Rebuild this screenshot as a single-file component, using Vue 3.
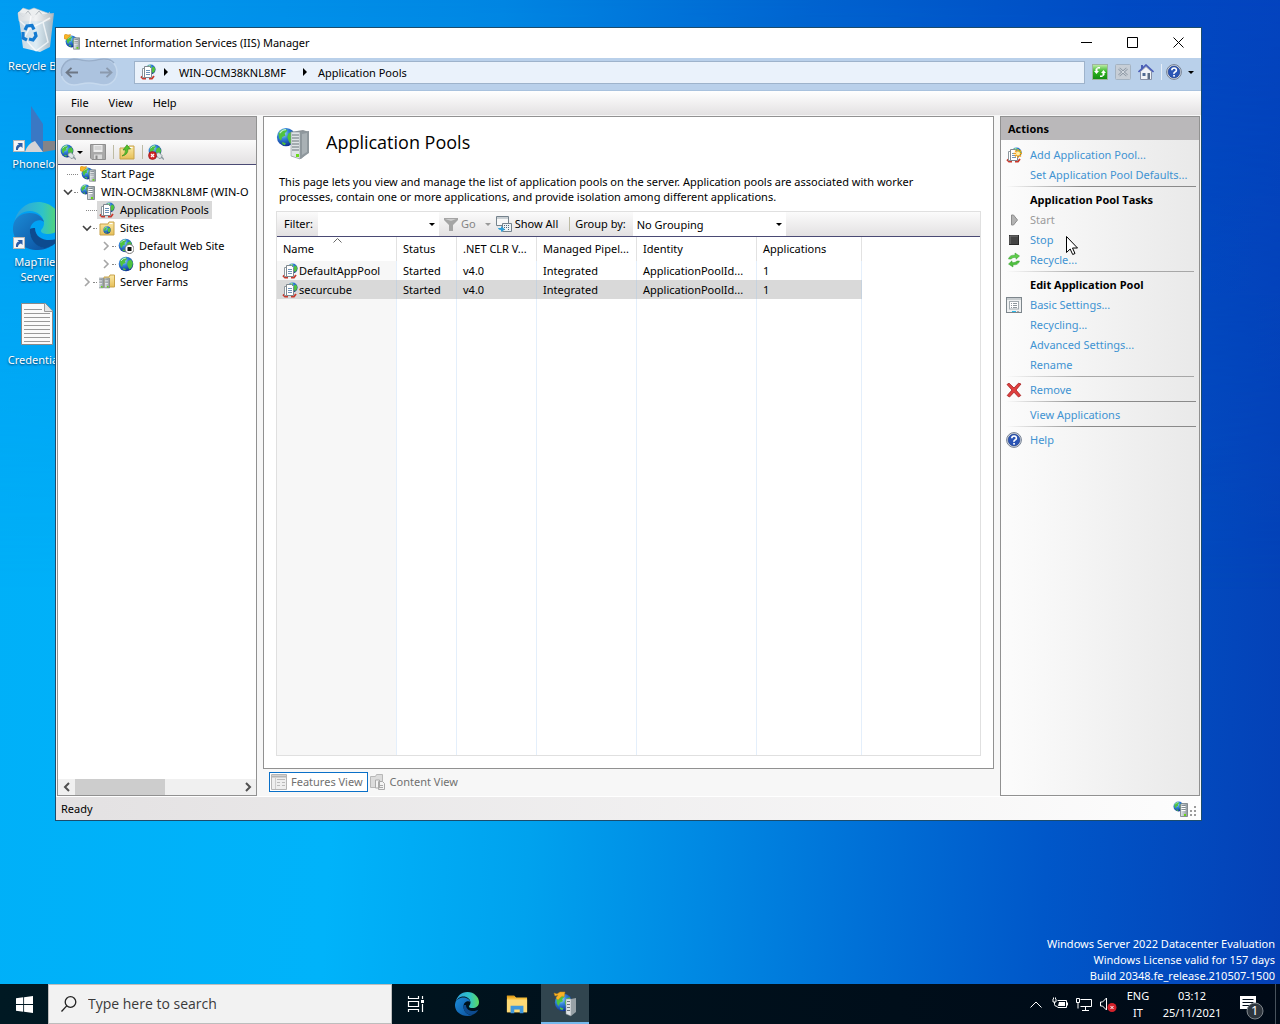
<script setup>
import { ref } from 'vue'

const desktopIcons = [
  { icon: 'bin', label: 'Recycle Bin' },
  { icon: 'phonelog', label: 'Phonelog' },
  { icon: 'edge', label: 'MapTiler Server', shortcut: true },
  { icon: 'textfile', label: 'Credentials' },
]

const tree = [
  { level: 0, icon: 'start', label: 'Start Page', twisty: '' },
  { level: 0, icon: 'globe-server', label: 'WIN-OCM38KNL8MF (WIN-O', twisty: 'open' },
  { level: 1, icon: 'pools', label: 'Application Pools', twisty: '', selected: true },
  { level: 1, icon: 'sites', label: 'Sites', twisty: 'open' },
  { level: 2, icon: 'globe-stop', label: 'Default Web Site', twisty: 'closed' },
  { level: 2, icon: 'globe', label: 'phonelog', twisty: 'closed' },
  { level: 1, icon: 'farms', label: 'Server Farms', twisty: 'closed' },
]

const columns = ['Name', 'Status', '.NET CLR V...', 'Managed Pipel...', 'Identity', 'Applications']
const pools = [
  { name: 'DefaultAppPool', cells: ['Started', 'v4.0', 'Integrated', 'ApplicationPoolId...', '1'] },
  { name: 'securcube', cells: ['Started', 'v4.0', 'Integrated', 'ApplicationPoolId...', '1'] },
]
const selectedPool = ref('securcube')

const actionGroups = [
  { items: [{ icon: 'pools-new', label: 'Add Application Pool...' }, { label: 'Set Application Pool Defaults...' }] },
  {
    title: 'Application Pool Tasks',
    items: [
      { icon: 'play', label: 'Start', disabled: true },
      { icon: 'stop', label: 'Stop' },
      { icon: 'recycle', label: 'Recycle...' },
    ],
  },
  {
    title: 'Edit Application Pool',
    short: true,
    items: [
      { icon: 'settings', label: 'Basic Settings...' },
      { label: 'Recycling...' },
      { label: 'Advanced Settings...' },
      { label: 'Rename' },
    ],
  },
  { short: true, items: [{ icon: 'remove', label: 'Remove' }] },
  { items: [{ label: 'View Applications' }] },
  { items: [{ icon: 'help', label: 'Help' }] },
]
</script>

<template>
  <div class="screen">
    <svg class="sprite" aria-hidden="true">
      <defs>
        <radialGradient id="gBlue" cx=".35" cy=".3" r=".75">
          <stop offset="0" stop-color="#b4e2ff" /><stop offset=".4" stop-color="#3385dc" /><stop offset="1" stop-color="#0c2c8e" />
        </radialGradient>
        <linearGradient id="gServer" x1="0" x2="1"><stop offset="0" stop-color="#e3e8ec" /><stop offset="1" stop-color="#8e979d" /></linearGradient>
        <linearGradient id="gFolder" x1="0" y1="0" x2="0" y2="1"><stop offset="0" stop-color="#fbe9a6" /><stop offset="1" stop-color="#e6bf58" /></linearGradient>
        <linearGradient id="gEdgeA" x1="0" x2="1"><stop offset="0" stop-color="#2d9fe0" /><stop offset=".6" stop-color="#2fc3c8" /><stop offset="1" stop-color="#5ed95e" /></linearGradient>
        <linearGradient id="gEdgeB" x1="0" y1="0" x2="1" y2="1"><stop offset="0" stop-color="#1b8bd6" /><stop offset="1" stop-color="#0c4f9e" /></linearGradient>
        <linearGradient id="gGreen" x1="0" y1="0" x2="0" y2="1"><stop offset="0" stop-color="#c4efae" /><stop offset=".5" stop-color="#2fb31f" /><stop offset="1" stop-color="#128a12" /></linearGradient>
        <linearGradient id="gBin" x1="0" x2="1"><stop offset="0" stop-color="#d5dade" /><stop offset=".5" stop-color="#f1f3f4" /><stop offset="1" stop-color="#aeb5bb" /></linearGradient>
      </defs>
      <symbol id="globe" viewBox="0 0 16 16">
        <circle cx="8" cy="8" r="7.3" fill="url(#gBlue)" />
        <path d="M2 5Q4 1.500 8 1.500L9 3 7 5 7.500 7 5 8 4 11 2.500 9ZM10 5l3-1.500 2 3.500-1 4-2.500 2.500L10 11l-1-3ZM5 12l3 1-1 1.500-2-1Z" fill="#4fc23f" />
        <path d="M3 5Q5 2 8 2" stroke="#d3f4ff" fill="none" opacity=".8" />
      </symbol>
      <symbol id="server" viewBox="0 0 8 14">
        <path d="M.5 1.500 2 .5h5.500V13.500H.5Z" fill="url(#gServer)" stroke="#737c82" stroke-width=".8" />
        <path d="M1.500 3.500h4M1.500 5.500h4M1.500 7.500h4" stroke="#fff" /><path d="M1.500 2.500h4M1.500 4.500h4M1.500 6.500h4" stroke="#59646b" stroke-width=".6" />
        <rect x="4" y="11" width="2" height="2" fill="#68d713" />
      </symbol>
      <symbol id="globe-server" viewBox="0 0 16 16">
        <use href="#globe" x="0" y="0" width="11" height="11" /><use href="#server" x="7" y="2" width="8" height="14" />
      </symbol>
      <symbol id="start" viewBox="0 0 16 16">
        <use href="#globe" x="1" y="1" width="13" height="13" />
        <path d="M0 1.500 1.500 0 4 1 6.500.5 6 2.500 4.500 3.500 2.500 5.500 0 4.500Z" fill="#f8b427" stroke="#c98410" stroke-width=".5" />
        <use href="#server" x="9" y="3" width="7" height="13" />
      </symbol>
      <symbol id="pools" viewBox="0 0 16 16">
        <use href="#globe" x="5" y="0" width="11" height="11" />
        <path d="M1 12.500 3 14.500h3M14 12l-2 2.500H9" stroke="#c9392d" stroke-width="1.800" fill="none" />
        <path d="M2.500 4.500h6v9h-6Z" fill="#fff" stroke="#8f989e" /><path d="M4.500 2.500h5l2 2v9h-7Z" fill="#fff" stroke="#7f888f" />
        <path d="M6 6.500h4M6 8.500h4M6 10.500h4" stroke="#6f93b8" />
      </symbol>
      <symbol id="pools-new" viewBox="0 0 16 16">
        <use href="#pools" width="16" height="16" />
        <path d="M12 2v9M7.500 6.500h9M9 3.500l6 6M15 3.500l-6 6" stroke="#f3a11c" stroke-width="1.300" /><circle cx="12" cy="6.500" r="2" fill="#fff1a8" />
      </symbol>
      <symbol id="folder" viewBox="0 0 16 16">
        <path d="M1 4h8l1-2h5v13H1Z" fill="url(#gFolder)" stroke="#c7a24a" /><path d="M10.500 3.500h3" stroke="#fff" />
      </symbol>
      <symbol id="sites" viewBox="0 0 16 16"><use href="#folder" width="16" height="16" /><use href="#globe" x="4" y="6" width="8" height="8" /></symbol>
      <symbol id="globe-stop" viewBox="0 0 16 16">
        <use href="#globe" width="15" height="15" /><circle cx="11.500" cy="11" r="4.500" fill="#fff" stroke="#777" /><rect x="9.500" y="9" width="4" height="4" fill="#111" />
      </symbol>
      <symbol id="farms" viewBox="0 0 16 16">
        <path d="M5 3h5l1-2h4.500v12H5Z" fill="url(#gFolder)" stroke="#c7a24a" /><use href="#server" x="-1" y="3" width="6" height="12" /><use href="#server" x="5" y="3" width="6" height="12" />
      </symbol>
      <symbol id="plug" viewBox="0 0 16 16">
        <use href="#globe" width="14" height="14" /><path d="M13 12.500l3 3" stroke="#8e9aa0" stroke-width="1.500" /><path d="M8 9.500 11 8.500l3 3-.5 2.500-2.500.5-3-3Z" fill="#dbe4e6" stroke="#7c888e" stroke-width=".8" />
      </symbol>
      <symbol id="unplug" viewBox="0 0 16 16">
        <use href="#plug" width="16" height="16" /><circle cx="4.500" cy="11.500" r="4" fill="#d32525" stroke="#8c1212" stroke-width=".6" /><path d="M3 10l3 3M6 10l-3 3" stroke="#fff" stroke-width="1.300" />
      </symbol>
      <symbol id="save" viewBox="0 0 16 16">
        <path d="M.5.5h15v15H2L.5 14Z" fill="#a9a9a9" stroke="#8f8f8f" /><path d="M3.500 1h9v7h-9Z" fill="#eee" /><path d="M4.500 3h7M4.500 5h7" stroke="#bbb" /><path d="M4 10.500h8V15H4Z" fill="#d9d9d9" /><path d="M5.500 11.500h2V15h-2Z" fill="#888" />
      </symbol>
      <symbol id="folder-up" viewBox="0 0 16 16">
        <use href="#folder" width="16" height="16" /><path d="M3 12Q7 10 6.500 6H4L8 .8 11.500 5H9Q9 11 3 12Z" fill="#56c02c" stroke="#2d8817" stroke-width=".6" />
      </symbol>
      <symbol id="refresh" viewBox="0 0 16 16">
        <rect x=".5" y=".5" width="15" height="15" fill="url(#gGreen)" stroke="#9fb39f" /><path d="M8 4.500H5.500V7H7L4.500 10 2 7h1.500V5L6 3h2ZM8 11.500h2.500V9H9l2.500-3L14 9h-1.500v2L10 13H8Z" fill="#fff" />
      </symbol>
      <symbol id="halt" viewBox="0 0 16 16">
        <rect x=".5" y=".5" width="15" height="15" rx="1" fill="#c7ced6" stroke="#a4b3c2" /><path d="M4 4.500l8 7M12 4.500l-8 7" stroke="#8e99a5" stroke-width="2.500" /><path d="M4 4.500l8 7M12 4.500l-8 7" stroke="#d9dfe5" />
      </symbol>
      <symbol id="home" viewBox="0 0 16 16">
        <path d="M2.500 7.500 8 2.500l5.500 5V15.500h-11Z" fill="#f1f3f7" stroke="#8790a5" /><path d="M3 1h2v4H3Z" fill="#4c5fb5" /><path d="M.5 8 8 1l7.500 7" fill="none" stroke="#4b5eb8" stroke-width="1.600" /><path d="M4.500 9h3v3h-3Z" fill="#506a92" /><path d="M9.500 9h2.500v6H9.500Z" fill="#5c6d85" />
      </symbol>
      <symbol id="help" viewBox="0 0 16 16">
        <circle cx="8" cy="8" r="7.400" fill="#e1e4ea" stroke="#737f91" /><circle cx="8" cy="8" r="5.900" fill="#2b55b5" stroke="#173780" stroke-width=".6" /><path d="M5.800 6.300Q5.800 4 8.100 4T10.400 6.200Q10.400 7.300 9 8T8 10" stroke="#fff" stroke-width="1.600" fill="none" /><rect x="7.200" y="11" width="1.700" height="1.600" fill="#fff" />
      </symbol>
      <symbol id="play" viewBox="0 0 16 16"><path d="M5.500 3v10h2l4-5-4-5Z" fill="#b3b3b3" stroke="#8d8d8d" /></symbol>
      <symbol id="stop" viewBox="0 0 16 16"><rect x="3.500" y="3.500" width="9" height="9" fill="#454545" stroke="#2a2a2a" /><path d="M4 12V4h8" stroke="#777" fill="none" /></symbol>
      <symbol id="recycle" viewBox="0 0 16 16">
        <path d="M2.500 7Q3.500 2.800 9 3.200V1l4.500 3L10 7.200V5.400Q6.500 5 5 7Z" fill="#5fce4a" stroke="#31982a" stroke-width=".5" /><path d="M13.500 9Q12.500 13.200 7 12.800V15l-4.500-3L6 8.800v1.800Q9.500 11 11 9Z" fill="#4fc03e" stroke="#31982a" stroke-width=".5" />
      </symbol>
      <symbol id="settings" viewBox="0 0 16 16">
        <rect x=".5" y=".5" width="15" height="15" fill="#eef0f1" stroke="#7d868c" /><path d="M1 2h14" stroke="#a1a9ae" /><rect x="3.500" y="4.500" width="9" height="7.500" fill="#fff" stroke="#a3abb0" /><path d="M5 6.500h1M7 6.500h4M5 8.500h1M7 8.500h4M5 10.500h1M7 10.500h4" stroke="#8e979d" /><path d="M6 14.500h4" stroke="#28b7e8" /><path d="M11 14.500h2" stroke="#aaa" />
      </symbol>
      <symbol id="remove" viewBox="0 0 16 16"><path d="M1 2.500 3 1.200 8 6l4.500-4.800L15 2 10 8l4.800 5.500L12.500 15 8 10.200 3.500 15 1.200 13.500 6 8Z" fill="#e04040" stroke="#a51d1d" stroke-width=".8" /></symbol>
      <symbol id="bin" viewBox="13 0 48 48">
        <path d="M18 7l5-5 6 2 5-2 8 3 11 4-3 6H19Z" fill="#eceff0" stroke="#bfc5c9" stroke-width=".6" />
        <path d="M18 6l5 5 5-6 5 7 6-7 5 6 6-5" fill="none" stroke="#b4bbc0" /><path d="M18 6l15 3 21-2-4 34-10 5-17-4Z" fill="url(#gBin)" opacity=".92" />
        <path d="M20 15l9 8-5 9 12 13M31 10l-2 13 14-7 5 20-12 9M43 16l7-4" stroke="#fff" stroke-width="1.500" opacity=".7" fill="none" />
        <path d="M25 24l2-4 5-.5 2 4M35 26l1 4-3 4-4-1M27 34l-4-2 0-6" stroke="#147bd1" stroke-width="3.200" fill="none" />
      </symbol>
      <symbol id="phonelog" viewBox="0 0 48 48">
        <path d="M18 2l12 18v28L18 37Z" fill="#3a78c4" /><path d="M12 48q2-8 10-11l8 11Z" fill="#d4d4d6" /><path d="M30 37h18v8l-18 3Z" fill="#848488" /><use href="#arrow" x="0" y="36" width="12" height="12" />
      </symbol>
      <symbol id="arrow" viewBox="0 0 12 12"><rect x=".5" y=".5" width="11" height="11" fill="#f6f6f6" stroke="#b7b7b7" /><path d="M3 10Q2.500 5 6 4.500L4.500 3h5v5L8 6.500Q5 7 5 10Z" fill="#2c5ea8" /></symbol>
      <symbol id="edge" viewBox="0 0 48 48">
        <path d="M1 22C3 9 12 0 25 0s23 10 23 20c0 8-6 12-13 12-4 0-7-1-7-3s3-3 3-8c0-7-7-12-14-12C9 9 3 14 1 22Z" fill="url(#gEdgeA)" />
        <path d="M0 25C1 15 9 11 17 11c8 0 13 5 14 9-4-4-14-1-14 9 0 11 10 19 20 16-4 2-8 3-12 3C10 48-1 38 0 25Z" fill="url(#gEdgeB)" />
        <path d="M17 27c-1 12 8 19 16 19 6-1 12-6 14-11-6 5-25 5-25-9-2 0-4 0-5 1Z" fill="#0d4b8f" />
      </symbol>
      <symbol id="textfile" viewBox="0 0 48 48">
        <path d="M8.500 3.500h24L39.500 11V44.500H8.500Z" fill="#fafafa" stroke="#8a8a8a" /><path d="M31.500 3.500V11.500h8" fill="#e4e4e4" stroke="#9a9a9a" />
        <path d="M11 9.500h18M11 13.500h26M11 17.500h26M11 21.500h26M11 25.500h26M11 29.500h26M11 33.500h26M11 37.500h26M11 41.500h26" stroke="#999" />
      </symbol>
    </svg>

    <main class="desktop">
      <ul class="shortcuts">
        <li v-for="item in desktopIcons" :key="item.label">
          <svg class="big" viewBox="0 0 48 48"><use :href="'#' + item.icon" /><use v-if="item.shortcut" href="#arrow" x="0" y="35" width="12" height="12" /></svg>
          <span>{{ item.label }}</span>
        </li>
      </ul>

      <section class="window">
        <header class="titlebar">
          <svg class="i16"><use href="#start" /></svg>
          <h1>Internet Information Services (IIS) Manager</h1>
          <button class="wbtn" aria-label="Minimize"><svg viewBox="0 0 11 11"><path d="M0 5.500h11" /></svg></button>
          <button class="wbtn" aria-label="Maximize"><svg viewBox="0 0 11 11"><path d="M.5.5h10v10H.5Z" /></svg></button>
          <button class="wbtn" aria-label="Close"><svg viewBox="0 0 11 11"><path d="M.5.5l10 10M10.500.5l-10 10" /></svg></button>
        </header>

        <nav class="navbar">
          <div class="history">
            <svg class="hist-shape" viewBox="0 0 58 28"><path d="M14 1C20 1 22 3 29 3S38 1 44 1a13 13 0 0 1 0 26C38 27 36 25 29 25S20 27 14 27a13 13 0 0 1 0-26Z" fill="#acc3df" stroke="#c6d9ee" stroke-width="1.500" /><path d="M2 18A13 13 0 0 1 14 1C20 1 22 3 29 3S38 1 44 1q7 0 10 4" fill="none" stroke="#98aeca" stroke-width="1.500" /></svg>
            <button aria-label="Back"><svg viewBox="0 0 13 11"><path d="M13 5.500H2M6.500.8 1.500 5.500l5 4.700" stroke="#6d7785" stroke-width="1.800" fill="none" /></svg></button>
            <button aria-label="Forward"><svg viewBox="0 0 13 11"><path d="M0 5.500h11M6.500.8l5 4.700-5 4.700" stroke="#8b9aae" stroke-width="1.800" fill="none" /></svg></button>
          </div>
          <div class="address">
            <svg class="i16"><use href="#pools" /></svg>
            <i class="tri"></i><span>WIN-OCM38KNL8MF</span><i class="tri"></i><span>Application Pools</span>
          </div>
          <div class="navtools">
            <button aria-label="Refresh"><svg class="i16"><use href="#refresh" /></svg></button>
            <button aria-label="Stop"><svg class="i16"><use href="#halt" /></svg></button>
            <button aria-label="Home"><svg class="i16"><use href="#home" /></svg></button>
            <button class="helpbtn" aria-label="Help"><svg class="i16"><use href="#help" /></svg><i class="caret"></i></button>
          </div>
        </nav>

        <div class="menu"><button>File</button><button>View</button><button>Help</button></div>

        <div class="body">
          <aside class="pane side">
            <h2>Connections</h2>
            <div class="conntools">
              <button class="withcaret" aria-label="Connect"><svg class="i16"><use href="#plug" /></svg><i class="caret"></i></button>
              <button aria-label="Save"><svg class="i16"><use href="#save" /></svg></button>
              <i class="vsep"></i>
              <button aria-label="Up"><svg class="i16"><use href="#folder-up" /></svg></button>
              <i class="vsep"></i>
              <button aria-label="Disconnect"><svg class="i16"><use href="#unplug" /></svg></button>
            </div>
            <ul class="tree">
              <li v-for="n in tree" :key="n.label" :class="['l' + n.level, { selected: n.selected }]">
                <svg class="twisty" viewBox="0 0 12 12"><path v-if="n.twisty === 'open'" d="M2 4l4 4 4-4" stroke="#404040" stroke-width="1.600" fill="none" /><path v-if="n.twisty === 'closed'" d="M4 2l4 4-4 4" stroke="#a6a6a6" stroke-width="1.600" fill="none" /></svg>
                <i class="dots" :class="{ wide: !n.twisty }"></i>
                <a href="#"><svg class="i16"><use :href="'#' + n.icon" /></svg><span>{{ n.label }}</span></a>
              </li>
            </ul>
            <div class="hscroll">
              <button aria-label="Scroll left"><svg viewBox="0 0 6 8"><path d="M5 0 1 4l4 4" /></svg></button>
              <div class="track"><div class="thumb"></div></div>
              <button aria-label="Scroll right"><svg viewBox="0 0 6 8"><path d="M1 0l4 4-4 4" /></svg></button>
            </div>
          </aside>

          <div class="center">
            <section class="pane page">
              <div class="heading">
                <svg viewBox="0 0 34 34"><use href="#globe" width="20" height="20" /><path d="M15 5l12-2 6 2v20l-8 7-10-3Z" fill="#8c9499" /><path d="M15 5h9v27l-9-3Z" fill="#dfe4e7" stroke="#8a9297" stroke-width=".6" /><path d="M24 5l9-1v22l-9 6Z" fill="#8f989d" /><path d="M26 7l5-1v19l-5 3Z" fill="#a9b1b5" /><path d="M16 8h7M16 11h7M16 14h7M16 17h7M16 20h7M16 23h7" stroke="#6a747a" /><rect x="20" y="27" width="3" height="3" fill="#6ddb1c" /></svg>
                <h2>Application Pools</h2>
              </div>
              <p>This page lets you view and manage the list of application pools on the server. Application pools are associated with worker processes, contain one or more applications, and provide isolation among different applications.</p>
              <div class="list">
                <div class="filterbar">
                  <label for="filter">Filter:</label>
                  <div class="combo"><input id="filter" type="text" /><button aria-label="Filter history"><i class="caret"></i></button></div>
                  <button class="tool dim go"><svg viewBox="0 0 14 14"><path d="M0 1h14v2L9 8v6H5V8L0 3Z" fill="#a5a5a5" /><path d="M1 2h11L7 4Z" fill="#ccc" /></svg><span>Go</span><i class="caret"></i></button>
                  <button class="tool"><svg viewBox="0 0 16 16"><path d="M.5.500h12v9H.5Z" fill="#f8f8f8" stroke="#75828c" /><path d="M1 2h11" stroke="#9ca8b0" /><path d="M6.500 7.500h9v8h-9Z" fill="#eef3f6" stroke="#75828c" /><path d="M8 9.500h1M10 9.500h1M12 9.500h1M8 11.500h1M10 11.500h1M12 11.500h1M8 13.500h1M12 13.500h1" stroke="#52677a" /><path d="M2 9v3h3v-2l4 3.500L5 16v-2Q1 14 2 9Z" fill="#2e9fd8" /></svg><span>Show All</span></button>
                  <i class="vsep"></i>
                  <label for="group">Group by:</label>
                  <div class="combo group"><select id="group"><option>No Grouping</option></select><i class="caret"></i></div>
                </div>
                <div class="grid">
                  <table>
                    <colgroup><col class="c-name" /><col class="c-status" /><col class="c-clr" /><col class="c-pipe" /><col class="c-id" /><col class="c-apps" /></colgroup>
                    <thead><tr><th v-for="(c, i) in columns" :key="c">{{ c }}<svg v-if="i === 0" class="sort" viewBox="0 0 9 5"><path d="M.5 4.500l4-4 4 4" fill="none" stroke="#666" /></svg></th></tr></thead>
                    <tbody>
                      <tr v-for="p in pools" :key="p.name" :class="{ picked: p.name === selectedPool }" @click="selectedPool = p.name">
                        <td><span class="poolname"><svg class="i16"><use href="#pools" /></svg>{{ p.name }}</span></td>
                        <td v-for="(c, i) in p.cells" :key="i">{{ c }}</td>
                      </tr>
                      <tr class="rest"><td v-for="c in columns" :key="c"></td></tr>
                    </tbody>
                  </table>
                </div>
              </div>
            </section>
            <div class="views">
              <button class="on"><svg viewBox="0 0 16 16"><path d="M.5.5h15v15H.5Z" fill="#eee" stroke="#b5b5b5" /><path d="M1 2.500h14" stroke="#b5b5b5" stroke-width="2" /><path d="M4.500 4v11" stroke="#ccc" /><path d="M6 5.500h8M6 8.500h3M11 8.500h3M6 11.500h3M11 11.500h3" stroke="#bbb" /></svg><span>Features View</span></button>
              <button><svg viewBox="0 0 16 16"><path d="M.5 13.500v-11h5l1-2h6v13Z" fill="#dcdcdc" stroke="#b8b8b8" /><path d="M5.500 6h4v8h-4ZM8.500 7.500h4l2 2v6h-6Z" fill="#f4f4f4" stroke="#aaa" /><path d="M10 11.500h3M10 13.500h3" stroke="#aaa" /></svg><span>Content View</span></button>
            </div>
          </div>

          <aside class="pane actions">
            <h2>Actions</h2>
            <div class="groups">
              <section v-for="(g, gi) in actionGroups" :key="gi" :class="{ short: g.short }">
                <h3 v-if="g.title">{{ g.title }}</h3>
                <div v-for="a in g.items" :key="a.label" class="action">
                  <svg class="i16"><use v-if="a.icon" :href="'#' + a.icon" /></svg>
                  <span v-if="a.disabled" class="off">{{ a.label }}</span><a v-else href="#">{{ a.label }}</a>
                </div>
              </section>
            </div>
          </aside>
        </div>

        <footer class="status">
          <span>Ready</span>
          <svg class="i16"><use href="#globe-server" /></svg>
          <svg class="grip" viewBox="0 0 8 10"><path d="M5 0h2v2H5zM5 4h2v2H5zM5 8h2v2H5zM1 4h2v2H1zM1 8h2v2H1z" fill="#9b9b9b" /></svg>
        </footer>
      </section>

      <div class="watermark"><span>Windows Server 2022 Datacenter Evaluation</span><span>Windows License valid for 157 days</span><span>Build 20348.fe_release.210507-1500</span></div>
      <svg class="cursor" viewBox="0 0 12 19"><path d="M.5.5v16l3.700-3.500 2.500 5.500 2.300-1-2.500-5.500h5Z" fill="#fff" stroke="#000" /></svg>
    </main>

    <footer class="taskbar">
      <button class="startbtn" aria-label="Start"><svg viewBox="0 0 16 16"><path d="M0 2.200 6.800 1.200v6.400H0ZM7.600 1.100 16 0v7.600H7.600ZM0 8.400h6.800v6.400L0 13.800ZM7.600 8.400H16V16l-8.400-1.200Z" fill="#fff" /></svg></button>
      <label class="search">
        <svg viewBox="0 0 16 16"><circle cx="9.500" cy="6" r="5.300" /><path d="M5.700 9.900.500 15.500" /></svg>
        <input type="text" placeholder="Type here to search" />
      </label>
      <button class="task" aria-label="Task view"><svg class="i18" viewBox="0 0 18 18"><path d="M1.500 1v2.500h10V1M1.500 17v-2.500h10V17M1.500 6.500h10v5h-10ZM15.500 1v3M15.500 9v8" fill="none" stroke="#fff" stroke-width="1.200" /><rect x="14" y="5" width="3" height="3" fill="#fff" /></svg></button>
      <button class="task edge" aria-label="Edge"><svg class="i24"><use href="#edge" /></svg></button>
      <button class="task files" aria-label="File Explorer"><svg viewBox="0 0 24 24"><path d="M1 3h8l2 2h12v16H1Z" fill="#f6bd3a" /><path d="M1 7h22v14H1Z" fill="#fdd976" /><path d="M5 22v-8h14v8h-4v-4H9v4Z" fill="#3f97dd" /><path d="M1 3h8l1 2H1Z" fill="#e19e1c" /></svg></button>
      <button class="task active" aria-label="IIS Manager"><svg class="i24" viewBox="0 0 24 24"><use href="#globe" x="1" y="1" width="19" height="19" /><path d="M1 1 4 2 7 0l5 0-1 5-2-1-4 4-2-2 2-3-3 1Z" fill="#f8b427" stroke="#c98410" stroke-width=".5" /><path d="M13 7h5v17l-5-2Z" fill="#dfe4e7" stroke="#8a9297" stroke-width=".5" /><path d="M18 7l5-1v14l-5 4Z" fill="#98a1a6" /><path d="M14 9.500h3M14 12.500h3M14 15.500h3M14 18.500h3" stroke="#6a747a" /></svg></button>
      <div class="tray">
        <svg class="chev" viewBox="0 0 12 7"><path d="M.5 6.500 6 1l5.500 5.500" /></svg>
        <svg class="i16" viewBox="0 0 16 16"><path d="M5.500 4.500h9v7h-9M15.500 6.500v3M1 3v3h3V3M2.500 6v2.500q0 2 3 2M1.500 3V1.500M3.500 3V1.500" /><path d="M7 6h6v4H6Z" fill="#fff" stroke="none" /></svg>
        <svg class="i16" viewBox="0 0 16 16"><path d="M4.500 3.500h11v7h-11M.5 2.500h3v4h-3ZM2 6.500v6M9.500 11v3M6 14.500h7" /></svg>
        <svg class="i16" viewBox="0 0 16 16"><path d="M.5 6h2L6.500 2v12l-4-4h-2Z" /><circle cx="12" cy="11.500" r="4.500" fill="#d3222b" stroke="none" /><path d="M10.500 10l3 3M13.500 10l-3 3" /></svg>
        <div class="lang"><span>ENG</span><span>IT</span></div>
        <div class="clock"><span>03:12</span><span>25/11/2021</span></div>
        <button class="notes" aria-label="Notifications"><svg viewBox="0 0 26 26"><path d="M2 2h16v13h-5l-4 4v-4H2Z" fill="#fff" /><path d="M4.500 5.500h11M4.500 8.500h11M4.500 11.500h8" stroke="#000b18" /><circle cx="17" cy="17" r="8" fill="#2f363e" stroke="#7e858b" /></svg><b>1</b></button>
        <i class="peek"></i>
      </div>
    </footer>
  </div>
</template>

<style>
body { background: #00111c; }
</style>

<style scoped>
* { box-sizing: border-box; }
.screen { min-height: 100vh; display: flex; flex-direction: column; font: 11px/15px "Noto Sans", "Open Sans", sans-serif; color: #000; }
.sprite { position: absolute; width: 0; height: 0; }
button, input, select { font: inherit; color: inherit; border: 0; background: none; padding: 0; margin: 0; outline: 0; }
button { display: flex; align-items: center; justify-content: center; }
svg { display: block; flex: none; overflow: visible; }
ul { list-style: none; margin: 0; padding: 0; }
h1, h2, h3, p { margin: 0; font-size: inherit; font-weight: 400; }
a { text-decoration: none; color: inherit; }
i { flex: none; }
.i16 { width: 16px; height: 16px; }
.i18 { width: 18px; height: 18px; }
.i24 { width: 24px; height: 24px; }
.caret { border: 3px solid transparent; border-top-color: #000; border-bottom: 0; }
.tri { border: 4px solid transparent; border-left-color: #000; border-right: 0; }
.vsep { width: 1px; height: 14px; background: #bdbba4; }

.desktop { position: relative; flex: 1; min-height: 740px; overflow: hidden; background: linear-gradient(93deg, #00b0f8 0%, #00b3fa 28%, #00a2ee 43%, #008be4 55%, #006fd6 69%, #0057c9 82%, #0440b6 100%); }
.desktop::before { content: ""; position: absolute; inset: 0; background: linear-gradient(97deg, #009cf2 0%, #0085e2 36%, #0064d0 57%, #004ac3 80%, #053eba 100%); mask-image: linear-gradient(#000, transparent 60%); }
.shortcuts { position: relative; width: 74px; padding-top: 6px; color: #fff; text-align: center; }
.shortcuts li { height: 98px; display: flex; flex-direction: column; align-items: center; gap: 4px; text-shadow: 0 1px 2px #003a66; }
.shortcuts span { padding: 0 4px; }
.big { width: 48px; height: 48px; }

.window { position: absolute; inset: 27px 78px 163px 55px; display: flex; flex-direction: column; border: 1px solid #1b4c6d; background: #f7f7f7; }
.titlebar { display: flex; align-items: center; height: 30px; background: #fff; padding-left: 8px; }
.titlebar .i16 { margin-bottom: 2px; }
.titlebar h1 { flex: 1; padding: 0 0 2px 5px; }
.wbtn { width: 46px; height: 28px; padding-bottom: 2px; }
.wbtn svg { width: 11px; height: 11px; fill: none; stroke: #000; }
.navbar { display: flex; align-items: center; height: 33px; padding: 0 7px 4px 4px; background: #b9d0ea; border-bottom: 1px solid #a9c2de; }
.history { position: relative; width: 58px; height: 28px; display: flex; align-items: center; justify-content: space-between; padding: 0 5px; margin-right: 16px; }
.hist-shape { position: absolute; inset: 0; width: 58px; height: 28px; }
.history button { position: relative; }
.history button svg { width: 13px; height: 11px; }
.address { flex: 1; display: flex; align-items: center; height: 23px; padding-left: 5px; border: 1px solid #9eb3cb; background: #eaf2fb; }
.address .tri { margin: 0 11px 0 8px; }
.address span + .tri { margin: 0 11px 0 17px; }
.navtools { display: flex; align-items: center; gap: 7px; padding-left: 7px; }
.helpbtn { gap: 6px; padding-left: 4px; border-left: 1px solid #e6eef8; }
.menu { display: flex; gap: 20px; height: 24px; padding: 0 0 2px 15px; background: linear-gradient(#fff, #e3e1e2); }

.body { flex: 1; min-height: 0; display: flex; gap: 6px; padding: 1px 1px 0; }
.pane { border: 1px solid #919191; display: flex; flex-direction: column; background: #fff; overflow: hidden; }
.side, .actions { width: 200px; flex: none; }
.pane > h2 { height: 23px; padding: 0 7px; line-height: 23px; font-family: "Open Sans", sans-serif; font-weight: 700; background: #bab8ba; }
.conntools { display: flex; align-items: center; gap: 5px; height: 25px; padding-left: 2px; background: linear-gradient(#fbfbfb, #e3e1e2); border-bottom: 1px solid #4a4a74; }
.withcaret { gap: 1px; margin-right: 2px; }
.conntools .vsep { margin-left: 2px; }
.tree { flex: 1; min-height: 0; overflow: hidden; }
.tree li { height: 18px; display: flex; align-items: center; padding-left: 4px; white-space: nowrap; }
.tree .l1 { padding-left: 23px; }
.tree .l2 { padding-left: 42px; }
.twisty { width: 12px; height: 12px; }
.dots { width: 4px; border-top: 1px dotted #888; }
.dots.wide { width: 11px; margin-left: -7px; }
.tree a { display: flex; align-items: center; height: 18px; padding-left: 2px; gap: 2px; }
.tree a span { padding: 0 3px 2px; }
.selected a { background: #d9d9d9; }
.hscroll { display: flex; height: 17px; background: #f0f0f0; border-top: 1px solid #fff; }
.hscroll button { width: 17px; }
.hscroll svg { width: 6px; height: 8px; fill: none; stroke: #505050; stroke-width: 2px; }
.track { flex: 1; }
.thumb { width: 90px; height: 100%; background: #cdcdcd; }

.center { flex: 1; min-width: 0; display: flex; flex-direction: column; }
.page { flex: 1; min-height: 0; padding: 10px 12px 12px; }
.heading { display: flex; align-items: center; gap: 16px; height: 34px; }
.heading svg { width: 34px; height: 34px; }
.heading h2 { font-family: "Open Sans", sans-serif; font-size: 18px; line-height: 26px; padding-bottom: 5px; }
.page p { padding: 13px 40px 7px 3px; }
.list { flex: 1; min-height: 0; display: flex; flex-direction: column; border: 1px solid #e0e0e0; }
.filterbar { display: flex; align-items: center; height: 25px; padding-left: 7px; background: linear-gradient(#fbfbfb, #e3e1e2); border-bottom: 1px solid #4a4a74; }
.filterbar label, .tool span { padding-bottom: 2px; }
.combo { display: flex; align-items: center; width: 121px; height: 24px; background: #fff; margin: 0 5px; padding-right: 4px; }
.combo input { flex: 1; min-width: 0; }
.combo.group { width: 153px; margin: 0 0 0 7px; }
.combo select { flex: 1; appearance: none; padding-left: 4px; }
.tool { gap: 3px; }
.tool svg { width: 16px; height: 16px; }
.tool.dim { color: #858585; margin-right: 5px; }
.tool.dim svg { width: 14px; height: 14px; }
.dim .caret { border-top-color: #999; margin-left: 6px; }
.filterbar .vsep { margin: 0 5px 0 11px; }
.grid { flex: 1; min-height: 0; display: flex; }
table { width: 585px; height: 100%; table-layout: fixed; border-collapse: collapse; }
.c-name { width: 120px; } .c-status { width: 60px; } .c-clr { width: 80px; } .c-pipe { width: 100px; } .c-id { width: 120px; } .c-apps { width: 105px; }
th, td { padding: 0 0 0 6px; text-align: left; font-weight: 400; white-space: nowrap; overflow: hidden; box-shadow: inset -1px 0 #e4effb; }
th { position: relative; height: 24px; padding-bottom: 2px; box-shadow: inset -1px 0 #e2e2e2; }
td { height: 19px; }
.rest td { height: auto; }
td:first-child { background: #f7f7f7; padding-left: 5px; }
.poolname { display: flex; align-items: center; gap: 1px; }
.picked td, .picked td:first-child { background: #d9d9d9; box-shadow: inset -1px 0 #c6d2de; }
.sort { position: absolute; left: 56px; top: 1px; width: 9px; height: 5px; }
.views { display: flex; height: 27px; padding: 3px 0 4px 6px; color: #707070; }
.views button { gap: 4px; padding: 0 4px 0 1px; border: 1px solid transparent; }
.views span { padding-bottom: 2px; }
.views .on { border-color: #0a70c8; background: #fff; }
.views svg { width: 16px; height: 16px; }

.actions { background: linear-gradient(90deg, #fcfcfc, #e9e9e9); }
.groups { padding: 5px 3px 0 5px; }
.groups section + section { padding-top: 5px; }
.groups section + section::before { content: ""; display: block; height: 1px; margin: -4px 0 3px; background: linear-gradient(90deg, transparent, #8a8a8a 40%); }
.groups section.short::before { margin-right: 2px; opacity: .7; }
.groups h3 { height: 20px; line-height: 20px; padding-left: 24px; font-family: "Open Sans", sans-serif; font-weight: 700; }
.action { display: flex; align-items: center; gap: 8px; height: 20px; color: #3f93d2; white-space: nowrap; }
.action a, .action span { padding-bottom: 2px; }
.off { color: #9b9b9b; }
.status { display: flex; align-items: center; height: 24px; padding: 0 4px 0 5px; border-top: 1px solid #fff; background: linear-gradient(90deg, #e3e1e2, #fdfdfd); }
.status span { flex: 1; }
.grip { width: 8px; height: 10px; margin-top: 4px; }

.watermark { position: absolute; right: 5px; bottom: 0; display: flex; flex-direction: column; text-align: right; color: #fff; line-height: 16px; }
.cursor { position: absolute; left: 1066px; top: 236px; width: 12px; height: 19px; }

.taskbar { display: flex; height: 40px; background: linear-gradient(90deg, #001923, #00121d 40%, #000a17); color: #fff; }
.startbtn { width: 48px; }
.startbtn svg { width: 17px; height: 17px; }
.search { display: flex; align-items: center; width: 344px; gap: 11px; padding-left: 12px; background: #f2f2f2; border: 1px solid #bdbdbd; }
.search svg { width: 16px; height: 16px; fill: none; stroke: #222; stroke-width: 1.300px; }
.search input { flex: 1; font-family: "Open Sans", sans-serif; font-size: 14px; line-height: 20px; color: #333; }
.search input::placeholder { color: #3a3a3a; opacity: 1; }
.task { width: 48px; border-bottom: 2px solid transparent; border-top: 2px solid transparent; }
.task.edge { width: 53px; }
.files svg { width: 22px; height: 22px; }
.active { background: #31454f; border-bottom-color: #76b9ed; border-top-color: #31454f; }
.tray { flex: 1; display: flex; align-items: center; justify-content: flex-end; gap: 8px; }
.tray svg { fill: none; stroke: #fff; }
.chev { width: 12px; height: 7px; margin-right: 2px; }
.lang, .clock { display: flex; flex-direction: column; align-items: center; line-height: 17px; }
.lang { width: 28px; }
.clock { width: 64px; }
.notes { position: relative; width: 48px; height: 40px; margin-left: -5px; padding-top: 6px; }
.notes svg { width: 26px; height: 26px; stroke: none; }
.notes b { position: absolute; left: 24px; top: 19px; font-size: 13px; font-weight: 400; }
.peek { width: 1px; height: 40px; background: #47525c; margin-right: 4px; margin-left: -8px; }
</style>
